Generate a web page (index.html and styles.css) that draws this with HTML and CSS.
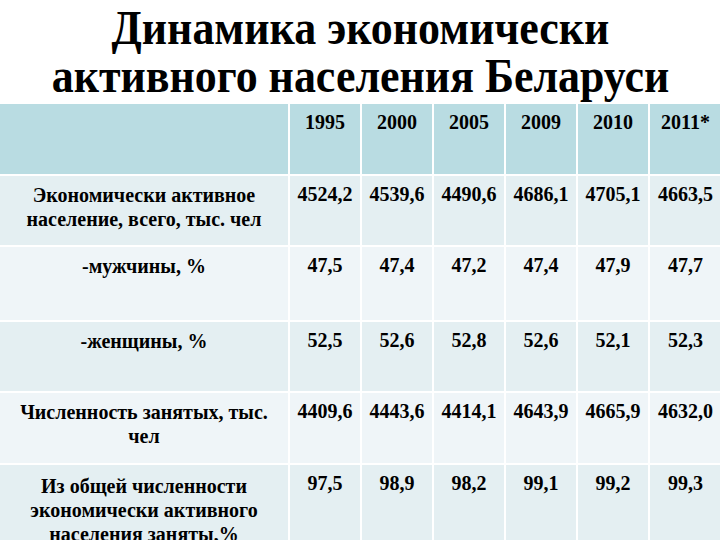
FILE: index.html
```html
<!DOCTYPE html>
<html lang="ru">
<head>
<meta charset="utf-8">
<link rel="stylesheet" href="styles.css">
</head>
<body>
<div class="slide">
  <h1 class="title"><span class="title-inner">Динамика экономически<br>активного населения Беларуси</span></h1>
  <table class="data">
    <colgroup>
      <col class="c-label"><col class="c-num"><col class="c-num"><col class="c-num"><col class="c-num"><col class="c-num"><col class="c-num">
    </colgroup>
    <thead>
      <tr class="head">
        <th></th><th>1995</th><th>2000</th><th>2005</th><th>2009</th><th>2010</th><th>2011*</th>
      </tr>
    </thead>
    <tbody>
      <tr class="odd r1">
        <td class="label">Экономически активное население, всего, тыс. чел</td>
        <td>4524,2</td><td>4539,6</td><td>4490,6</td><td>4686,1</td><td>4705,1</td><td>4663,5</td>
      </tr>
      <tr class="even r2">
        <td class="label">-мужчины, %</td>
        <td>47,5</td><td>47,4</td><td>47,2</td><td>47,4</td><td>47,9</td><td>47,7</td>
      </tr>
      <tr class="odd r3">
        <td class="label">-женщины, %</td>
        <td>52,5</td><td>52,6</td><td>52,8</td><td>52,6</td><td>52,1</td><td>52,3</td>
      </tr>
      <tr class="even r4">
        <td class="label">Численность занятых, тыс. чел</td>
        <td>4409,6</td><td>4443,6</td><td>4414,1</td><td>4643,9</td><td>4665,9</td><td>4632,0</td>
      </tr>
      <tr class="odd r5">
        <td class="label">Из общей численности экономически активного населения заняты,%</td>
        <td>97,5</td><td>98,9</td><td>98,2</td><td>99,1</td><td>99,2</td><td>99,3</td>
      </tr>
    </tbody>
  </table>
</div>
</body>
</html>
```

FILE: styles.css
```css
html, body {
  margin: 0;
  padding: 0;
  background: #ffffff;
  font-family: "Liberation Serif", "Times New Roman", serif;
}
.slide {
  width: 720px;
  height: 540px;
  overflow: hidden;
  font-family: "Liberation Serif", "Times New Roman", serif;
  color: #000;
}
.title {
  margin: 0;
  height: 102px;
  text-align: center;
  font-family: "Liberation Serif", "Times New Roman", serif;
  font-weight: bold;
  font-size: 48px;
  line-height: 48px;
  padding-top: 4px;
  box-sizing: border-box;
  white-space: nowrap;
}
.title-inner {
  display: inline-block;
  transform: scaleX(0.915);
  transform-origin: center top;
}
.data {
  width: 720px;
  border-collapse: collapse;
  table-layout: fixed;
  font-family: "Liberation Serif", "Times New Roman", serif;
  font-weight: bold;
  font-size: 20px;
}
.c-label { width: 289px; }
.c-num { width: 72px; }
.data th, .data td {
  font-family: "Liberation Serif", "Times New Roman", serif;
  border: 2px solid #ffffff;
  text-align: center;
  vertical-align: top;
  padding: 6px 2px 0 2px;
  line-height: 24px;
}
.data tr > :first-child { border-left: none; }
.data tr > :last-child { border-right: none; }
.data td.label {
  font-size: 20px;
  padding: 7px 12px 0 12px;
}
.r5 td.label { padding-top: 9px; }
.head th {
  background: #b9dce2;
  height: 64px;
}
.odd td { background: #e4eff2; }
.even td { background: #eff5f8; }
.r1 td { height: 62px; }
.r2 td { height: 66px; }
.r3 td { height: 62px; }
.r4 td { height: 63px; }
.r5 td { height: 80px; }
```
